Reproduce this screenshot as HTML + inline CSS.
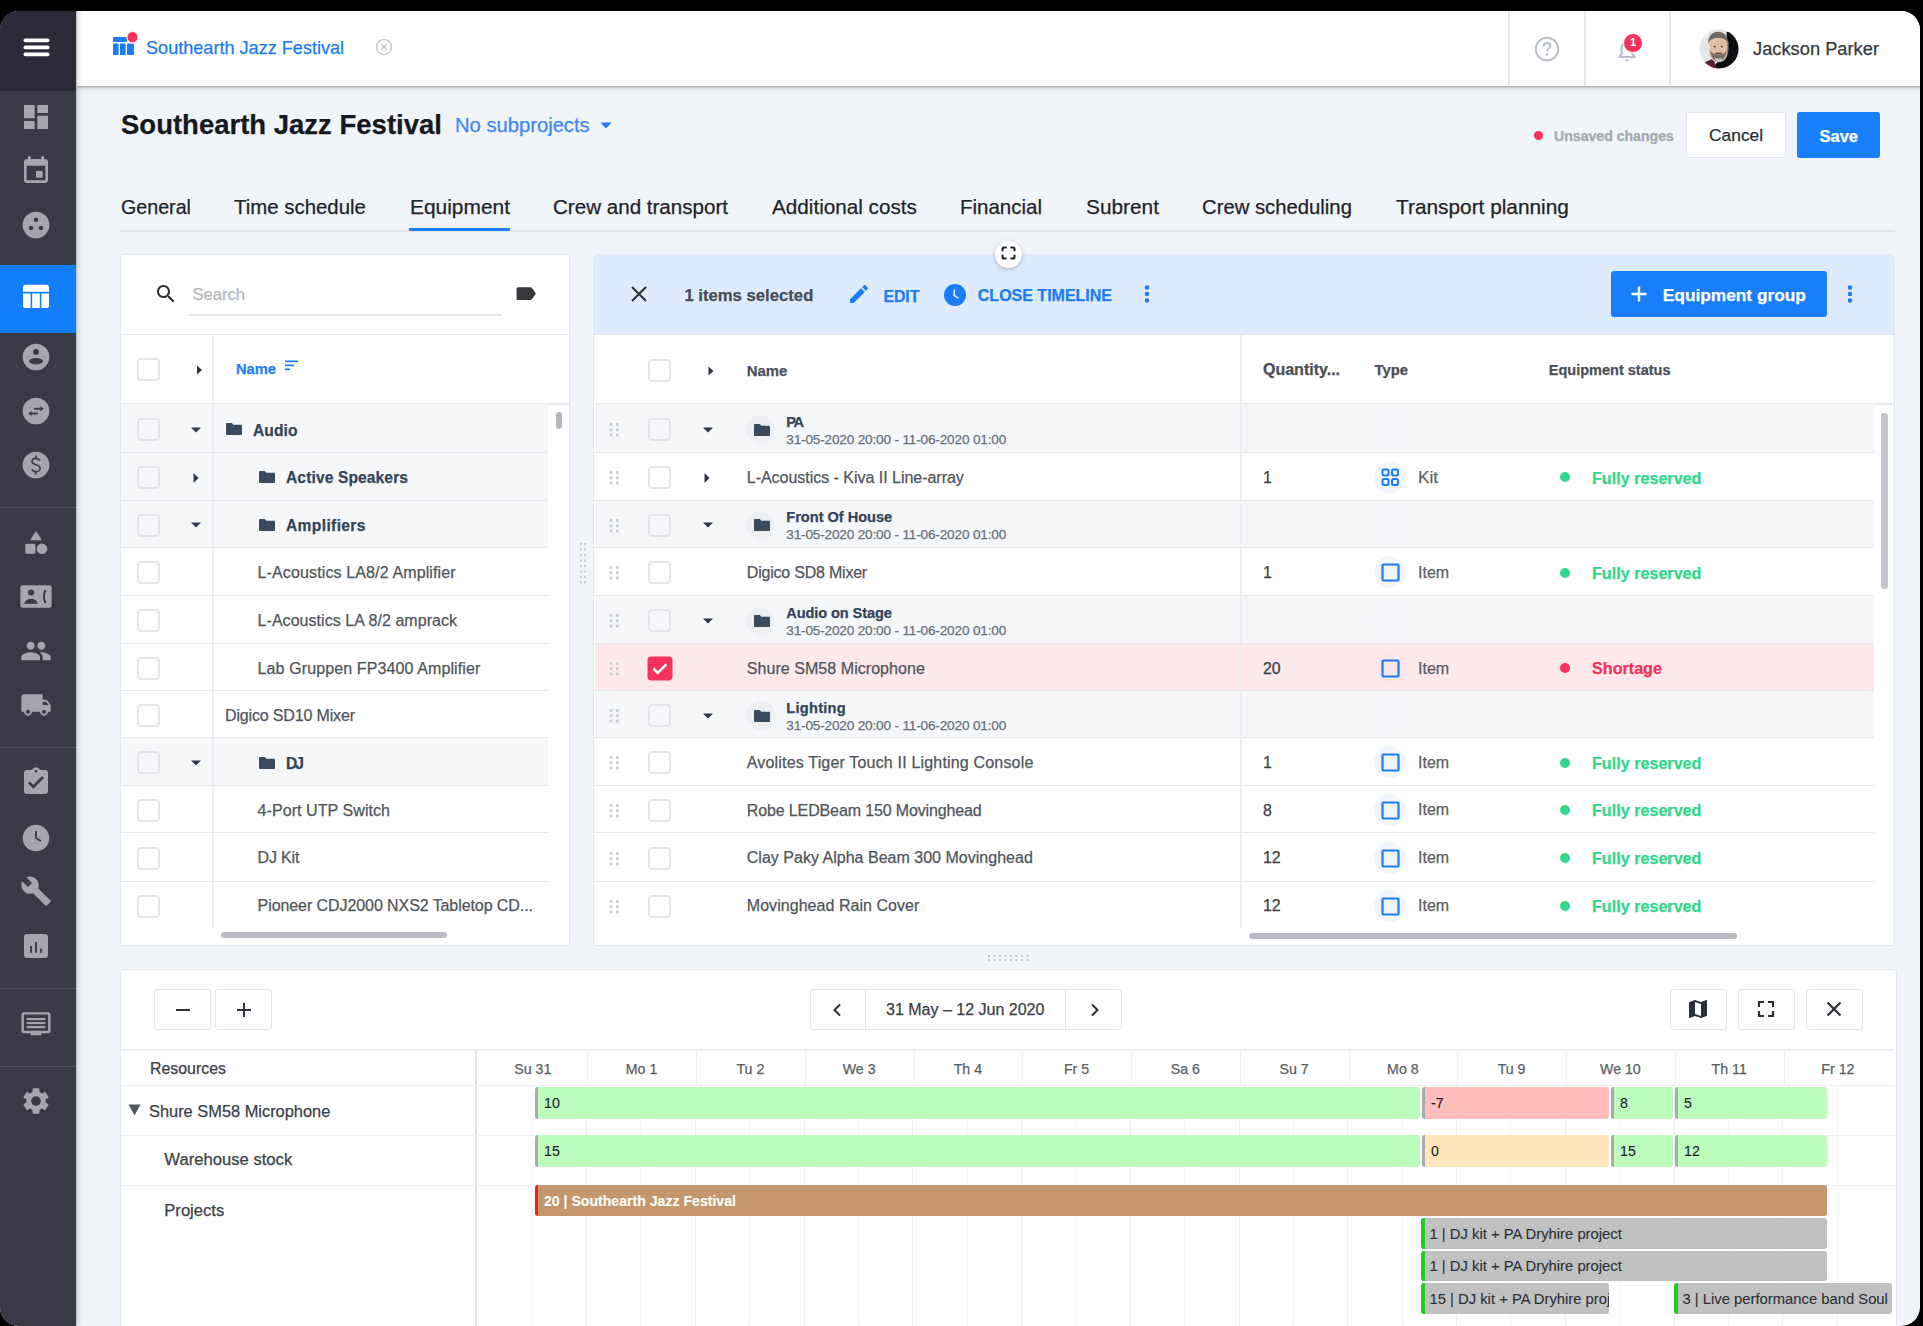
<!DOCTYPE html>
<html><head><meta charset="utf-8"><style>
*{box-sizing:border-box;margin:0;padding:0}
html,body{width:1923px;height:1326px;overflow:hidden;background:#000;font-family:"Liberation Sans",sans-serif;color:#2b3038}
.a{position:absolute}
#frame{position:absolute;left:0;top:11px;width:1920px;height:1315px;border-radius:19px;overflow:hidden;background:#f1f4f9}
#pg{position:absolute;left:0;top:-11px;width:1923px;height:1326px}
.t{position:absolute;white-space:nowrap;line-height:1;-webkit-text-stroke:0.25px currentColor}
.b{font-weight:bold}
.panel{position:absolute;background:#fff;border:1px solid #e4e7ec;border-radius:4px}
.cb{position:absolute;width:23px;height:23px;border:2px solid #e3e5e9;border-radius:4px;background:#fff}
.hl{position:absolute;height:1px;background:#e7e9ec}
.vl{position:absolute;width:1px;background:#e7e9ec}
</style></head><body><div id="frame"><div id="pg">
<div class="a" style="left:76px;top:0;width:1850px;height:86px;background:#fff;box-shadow:0 1px 2px rgba(0,0,0,.3),0 3px 7px rgba(0,0,0,.1)"></div>
<svg class="a" style="left:112px;top:30px" width="26" height="28" viewBox="0 0 26 28"><rect x="1" y="7" width="14" height="5" rx="1" fill="#1a7cf6"/><rect x="1" y="13.5" width="5.6" height="11.5" rx="1" fill="#1a7cf6"/><rect x="8" y="13.5" width="5.6" height="11.5" fill="#1a7cf6"/><rect x="15" y="13.5" width="7" height="11.5" rx="1" fill="#1a7cf6"/><circle cx="20.5" cy="7.2" r="5.6" fill="#f5325c" stroke="#fff" stroke-width="1"/></svg>
<div class="t" style="left:146px;top:39.2px;font-size:18.1px;color:#1a7cf6;">Southearth Jazz Festival</div>
<svg class="a" style="left:375px;top:38px" width="18" height="18" viewBox="0 0 18 18"><circle cx="9" cy="9" r="7.5" fill="none" stroke="#c9ccd1" stroke-width="1.6"/><path d="M6.2 6.2l5.6 5.6M11.8 6.2l-5.6 5.6" stroke="#c9ccd1" stroke-width="1.6"/></svg>
<div class="a" style="left:1508px;top:11px;width:2px;height:75px;background:#e6e8eb"></div>
<div class="a" style="left:1584px;top:11px;width:2px;height:75px;background:#e6e8eb"></div>
<div class="a" style="left:1669px;top:11px;width:2px;height:75px;background:#e6e8eb"></div>
<svg class="a" style="left:1533px;top:35px" width="28" height="28" viewBox="0 0 28 28"><circle cx="14" cy="14" r="11.3" fill="none" stroke="#b9c0c8" stroke-width="2"/><path d="M10.6 11.2c0-2 1.5-3.3 3.4-3.3s3.4 1.3 3.4 3.1c0 2.4-3.3 2.6-3.3 5.2" fill="none" stroke="#b9c0c8" stroke-width="2"/><circle cx="14" cy="19.6" r="1.3" fill="#b9c0c8"/></svg>
<svg class="a" style="left:1614px;top:38px" width="26" height="26" viewBox="0 0 26 26"><path d="M13 4.2c-3.4 0-5.4 2.6-5.4 5.9v6.2L5.2 19h15.6l-2.4-2.7v-6.2c0-3.3-2-5.9-5.4-5.9z" fill="none" stroke="#b9c0c8" stroke-width="2.2" stroke-linejoin="round"/><path d="M11 21.6h4a2 2 0 0 1-4 0z" fill="#b9c0c8"/></svg>
<div class="a" style="left:1623px;top:33px;width:20px;height:20px;border-radius:50%;background:#f5325c;border:1.5px solid #fff;color:#fff;font-size:11px;font-weight:bold;line-height:17px;text-align:center">1</div>
<svg class="a" style="left:1699px;top:29px" width="40" height="40" viewBox="0 0 42 42"><defs><clipPath id="av"><circle cx="21" cy="21" r="20.5"/></clipPath></defs><g clip-path="url(#av)"><rect width="42" height="42" fill="#e4e7ea"/><path d="M29 3H42V42H13L21 33L29 28Z" fill="#0e0d11"/><path d="M2 42L6 35 15 31 19 42Z" fill="#5c1f37"/><path d="M11 16c0-7 4-11 9.5-11S30 9 30 16v8c0 7-4 11-9.5 11S11 31 11 24z" fill="#e2bea5"/><path d="M14 9c2-2 4-3 7-3 4 0 7 2 8 5-2-1-5-2-8-2s-5 1-7 0z" fill="#f3dccb"/><path d="M9.5 16C9.5 7 14 3 20 3s10.5 4 10.5 12c-2-4-5-5.5-10.5-5.5S11.5 11 9.5 16z" fill="#6d6b6a"/><path d="M29.5 12l1.5 1v10l-1.5 2z" fill="#8a8886"/><path d="M11.5 22c1 8 4.5 12 9 12s8-4 8.5-12c-1.5 3-3.5 4.5-8.5 4.5S13 25 11.5 22z" fill="#77706b"/><path d="M16 31c1.2 2 2.8 3.3 4.8 3.3S24 33 25 31z" fill="#c9c9c9"/><circle cx="16.5" cy="18.5" r="1" fill="#3b3030"/><circle cx="24" cy="18.5" r="1" fill="#3b3030"/><path d="M17 25.5h7" stroke="#3a2a26" stroke-width="1.2"/></g></svg>
<div class="t" style="left:1753px;top:39.5px;font-size:18.3px;color:#34383e;">Jackson Parker</div>
<div class="t" style="left:121px;top:111.3px;font-size:27.5px;color:#15181d;font-weight:bold;">Southearth Jazz Festival</div>
<div class="t" style="left:455px;top:115.2px;font-size:20.2px;color:#3d87f5;">No subprojects</div>
<svg class="a" style="left:599px;top:121px" width="14" height="9" viewBox="0 0 14 9"><path d="M1.5 1.5h11L7 7.5z" fill="#1a7cf6"/></svg>
<div class="a" style="left:1534px;top:131px;width:9px;height:9px;border-radius:50%;background:#f5325c"></div>
<div class="t" style="left:1554px;top:129.4px;font-size:14.1px;color:#a3a8ae;font-weight:bold;">Unsaved changes</div>
<div class="a" style="left:1686px;top:112px;width:100px;height:46px;background:#fff;border:1px solid #e1e4e8;border-radius:3px"></div>
<div class="t" style="left:1709px;top:127.3px;font-size:17.4px;color:#2b2f35;">Cancel</div>
<div class="a" style="left:1797px;top:112px;width:83px;height:46px;background:#187efa;border-radius:3px"></div>
<div class="t" style="left:1819.5px;top:128.0px;font-size:16.5px;color:#fff;font-weight:bold;">Save</div>
<div class="t" style="left:121px;top:197.8px;font-size:19.68px;color:#1f232a;">General</div>
<div class="t" style="left:234px;top:197.2px;font-size:20.42px;color:#1f232a;">Time schedule</div>
<div class="t" style="left:410px;top:196.8px;font-size:20.92px;color:#1f232a;">Equipment</div>
<div class="t" style="left:553px;top:197.1px;font-size:20.58px;color:#1f232a;">Crew and transport</div>
<div class="t" style="left:772px;top:197.0px;font-size:20.7px;color:#1f232a;">Additional costs</div>
<div class="t" style="left:960px;top:197.1px;font-size:20.49px;color:#1f232a;">Financial</div>
<div class="t" style="left:1086px;top:196.8px;font-size:20.84px;color:#1f232a;">Subrent</div>
<div class="t" style="left:1202px;top:197.3px;font-size:20.29px;color:#1f232a;">Crew scheduling</div>
<div class="t" style="left:1396px;top:196.8px;font-size:20.84px;color:#1f232a;">Transport planning</div>
<div class="a" style="left:120px;top:230px;width:1775px;height:2px;background:#e3e5e9"></div>
<div class="a" style="left:409px;top:228px;width:101px;height:3px;background:#1a7cf6;border-radius:1px"></div>
<div class="panel" style="left:120px;top:254px;width:450px;height:692px"></div>
<svg class="a" style="left:154px;top:282px" width="24" height="24" viewBox="0 0 24 24"><path fill="#2b2f36" d="M15.5 14h-.79l-.28-.27C15.41 12.59 16 11.11 16 9.5 16 5.91 13.09 3 9.5 3S3 5.91 3 9.5 5.91 16 9.5 16c1.61 0 3.09-.59 4.23-1.57l.27.28v.79l5 4.99L20.49 19l-4.99-5zm-6 0C7.01 14 5 11.99 5 9.5S7.01 5 9.5 5 14 7.01 14 9.5 11.99 14 9.5 14z"/></svg>
<div class="t" style="left:192.5px;top:287.4px;font-size:16.6px;color:#b3b7bd;">Search</div>
<div class="a" style="left:189px;top:314px;width:313px;height:2px;background:#e2e5e9"></div>
<svg class="a" style="left:515px;top:284px" width="22" height="20" viewBox="0 0 24 20"><path d="M3.5 2.5h13.2c.7 0 1.3.3 1.7.8l4 5.6c.3.4.3.9 0 1.3l-4 5.6c-.4.5-1 .8-1.7.8H3.5c-1 0-1.8-.8-1.8-1.8V4.3c0-1 .8-1.8 1.8-1.8z" fill="#36383c"/></svg>
<div class="hl" style="left:121px;top:334px;width:448px"></div>
<div class="cb" style="left:137px;top:358px"></div>
<svg class="a" style="left:195px;top:364px" width="9" height="12" viewBox="0 0 9 12"><path d="M2 1.5l5 4.5-5 4.5z" fill="#2b3340"/></svg>
<div class="t" style="left:236px;top:362.0px;font-size:14.7px;color:#1a7cf6;font-weight:bold;">Name</div>
<svg class="a" style="left:284px;top:359px" width="16" height="14" viewBox="0 0 16 14"><rect x="1" y="1.5" width="13" height="1.7" fill="#1a7cf6"/><rect x="1" y="5.5" width="9" height="1.7" fill="#1a7cf6"/><rect x="1" y="9.5" width="5" height="1.7" fill="#1a7cf6"/></svg>
<div class="hl" style="left:121px;top:403px;width:448px;height:2px"></div>
<div class="a" style="left:121px;top:404.3px;width:427px;height:48.0px;background:#f6f7f9"></div>
<div class="cb" style="left:137px;top:418.0px;background:#f6f7f9;"></div>
<svg class="a" style="left:190px;top:425.7px" width="12" height="8" viewBox="0 0 12 8"><path d="M1 1.5h10L6 6.5z" fill="#2e3b4c"/></svg>
<svg class="a" style="left:225px;top:422.3px" width="18" height="14" viewBox="0 0 18 14"><path d="M1 2.2C1 1.5 1.5 1 2.2 1h4.6l1.6 1.7h7.4c.7 0 1.2.5 1.2 1.2v8c0 .7-.5 1.2-1.2 1.2H2.2c-.7 0-1.2-.5-1.2-1.2z" fill="#3a4a5d"/></svg>
<div class="t" style="left:253.0px;top:422.5px;font-size:15.6px;color:#34445a;font-weight:bold;letter-spacing:0.069px;">Audio</div>
<div class="a" style="left:121px;top:452.3px;width:427px;height:47.8px;background:#f6f7f9"></div>
<div class="cb" style="left:137px;top:465.9px;background:#f6f7f9;"></div>
<svg class="a" style="left:192px;top:471.6px" width="9" height="12" viewBox="0 0 9 12"><path d="M1.5 1l5 5-5 5z" fill="#2e3b4c"/></svg>
<svg class="a" style="left:258px;top:470.2px" width="18" height="14" viewBox="0 0 18 14"><path d="M1 2.2C1 1.5 1.5 1 2.2 1h4.6l1.6 1.7h7.4c.7 0 1.2.5 1.2 1.2v8c0 .7-.5 1.2-1.2 1.2H2.2c-.7 0-1.2-.5-1.2-1.2z" fill="#3a4a5d"/></svg>
<div class="t" style="left:286.0px;top:470.4px;font-size:15.6px;color:#34445a;font-weight:bold;letter-spacing:0.106px;">Active Speakers</div>
<div class="a" style="left:121px;top:500.1px;width:427px;height:47.3px;background:#f6f7f9"></div>
<div class="cb" style="left:137px;top:513.5px;background:#f6f7f9;"></div>
<svg class="a" style="left:190px;top:521.1px" width="12" height="8" viewBox="0 0 12 8"><path d="M1 1.5h10L6 6.5z" fill="#2e3b4c"/></svg>
<svg class="a" style="left:258px;top:517.8px" width="18" height="14" viewBox="0 0 18 14"><path d="M1 2.2C1 1.5 1.5 1 2.2 1h4.6l1.6 1.7h7.4c.7 0 1.2.5 1.2 1.2v8c0 .7-.5 1.2-1.2 1.2H2.2c-.7 0-1.2-.5-1.2-1.2z" fill="#3a4a5d"/></svg>
<div class="t" style="left:286.0px;top:517.9px;font-size:15.6px;color:#34445a;font-weight:bold;letter-spacing:0.357px;">Amplifiers</div>
<div class="cb" style="left:137px;top:561.4px;"></div>
<div class="t" style="left:257.6px;top:565.2px;font-size:16px;color:#50555c;letter-spacing:0.126px;">L-Acoustics LA8/2 Amplifier</div>
<div class="cb" style="left:137px;top:609.3px;"></div>
<div class="t" style="left:257.6px;top:613.1px;font-size:16px;color:#50555c;letter-spacing:0.044px;">L-Acoustics LA 8/2 amprack</div>
<div class="cb" style="left:137px;top:656.8px;"></div>
<div class="t" style="left:257.6px;top:660.6px;font-size:16px;color:#50555c;letter-spacing:0.112px;">Lab Gruppen FP3400 Amplifier</div>
<div class="cb" style="left:137px;top:704.1px;"></div>
<div class="t" style="left:225.0px;top:707.9px;font-size:16px;color:#50555c;letter-spacing:-0.155px;">Digico SD10 Mixer</div>
<div class="a" style="left:121px;top:737.9px;width:427px;height:47.5px;background:#f6f7f9"></div>
<div class="cb" style="left:137px;top:751.4px;background:#f6f7f9;"></div>
<svg class="a" style="left:190px;top:759.0px" width="12" height="8" viewBox="0 0 12 8"><path d="M1 1.5h10L6 6.5z" fill="#2e3b4c"/></svg>
<svg class="a" style="left:258px;top:755.6px" width="18" height="14" viewBox="0 0 18 14"><path d="M1 2.2C1 1.5 1.5 1 2.2 1h4.6l1.6 1.7h7.4c.7 0 1.2.5 1.2 1.2v8c0 .7-.5 1.2-1.2 1.2H2.2c-.7 0-1.2-.5-1.2-1.2z" fill="#3a4a5d"/></svg>
<div class="t" style="left:286.0px;top:755.8px;font-size:15.6px;color:#34445a;font-weight:bold;letter-spacing:-1.968px;">DJ</div>
<div class="cb" style="left:137px;top:798.7px;"></div>
<div class="t" style="left:257.6px;top:802.5px;font-size:16px;color:#50555c;letter-spacing:0.070px;">4-Port UTP Switch</div>
<div class="cb" style="left:137px;top:846.5px;"></div>
<div class="t" style="left:257.6px;top:850.3px;font-size:16px;color:#50555c;letter-spacing:-0.168px;">DJ Kit</div>
<div class="cb" style="left:137px;top:894.5px;"></div>
<div class="t" style="left:257.6px;top:898.3px;font-size:16px;color:#50555c;letter-spacing:-0.079px;">Pioneer CDJ2000 NXS2 Tabletop CD...</div>
<div class="vl" style="left:212px;top:335px;height:594px;width:2px;background:#eceef1"></div>
<div class="hl" style="left:121px;top:451.7px;width:427px;background:#e6e8eb"></div>
<div class="hl" style="left:121px;top:499.5px;width:427px;background:#e6e8eb"></div>
<div class="hl" style="left:121px;top:546.8px;width:427px;background:#e6e8eb"></div>
<div class="hl" style="left:121px;top:595.4px;width:427px;background:#e6e8eb"></div>
<div class="hl" style="left:121px;top:642.6px;width:427px;background:#e6e8eb"></div>
<div class="hl" style="left:121px;top:690.3px;width:427px;background:#e6e8eb"></div>
<div class="hl" style="left:121px;top:737.3px;width:427px;background:#e6e8eb"></div>
<div class="hl" style="left:121px;top:784.8px;width:427px;background:#e6e8eb"></div>
<div class="hl" style="left:121px;top:831.9px;width:427px;background:#e6e8eb"></div>
<div class="hl" style="left:121px;top:880.5px;width:427px;background:#e6e8eb"></div>
<div class="a" style="left:556px;top:412px;width:6px;height:17px;border-radius:3px;background:#b3b6bb"></div>
<div class="a" style="left:221px;top:932px;width:226px;height:6px;border-radius:3px;background:#b9bcc2"></div>
<svg class="a" style="left:580px;top:543px" width="8" height="44"><rect x="0" y="0.0" width="2" height="2" fill="#c9ccd1"/><rect x="4" y="0.0" width="2" height="2" fill="#c9ccd1"/><rect x="0" y="5.5" width="2" height="2" fill="#c9ccd1"/><rect x="4" y="5.5" width="2" height="2" fill="#c9ccd1"/><rect x="0" y="11.0" width="2" height="2" fill="#c9ccd1"/><rect x="4" y="11.0" width="2" height="2" fill="#c9ccd1"/><rect x="0" y="16.5" width="2" height="2" fill="#c9ccd1"/><rect x="4" y="16.5" width="2" height="2" fill="#c9ccd1"/><rect x="0" y="22.0" width="2" height="2" fill="#c9ccd1"/><rect x="4" y="22.0" width="2" height="2" fill="#c9ccd1"/><rect x="0" y="27.5" width="2" height="2" fill="#c9ccd1"/><rect x="4" y="27.5" width="2" height="2" fill="#c9ccd1"/><rect x="0" y="33.0" width="2" height="2" fill="#c9ccd1"/><rect x="4" y="33.0" width="2" height="2" fill="#c9ccd1"/><rect x="0" y="38.5" width="2" height="2" fill="#c9ccd1"/><rect x="4" y="38.5" width="2" height="2" fill="#c9ccd1"/></svg>
<div class="panel" style="left:593px;top:254px;width:1302px;height:692px;overflow:hidden"><div class="a" style="left:0;top:0;width:100%;height:80px;background:#ddebfd"></div></div>
<div class="a" style="left:995px;top:241px;width:27px;height:27px;border-radius:50%;background:#fff;box-shadow:0 1px 4px rgba(0,0,0,.25)"></div>
<svg class="a" style="left:1000px;top:245px" width="17" height="17" viewBox="0 0 17 17"><path d="M2.5 5.5V4a1.5 1.5 0 0 1 1.5-1.5h1.8M11.2 2.5H13a1.5 1.5 0 0 1 1.5 1.5v1.5M14.5 10.5V12a1.5 1.5 0 0 1-1.5 1.5h-1.8M5.8 13.5H4A1.5 1.5 0 0 1 2.5 12v-1.5" fill="none" stroke="#222529" stroke-width="2.1" stroke-linecap="round"/></svg>
<svg class="a" style="left:629px;top:284px" width="20" height="20" viewBox="0 0 20 20"><path d="M3 3l14 14M17 3L3 17" stroke="#2b2f36" stroke-width="2"/></svg>
<div class="t" style="left:684.4px;top:287.9px;font-size:16.7px;color:#454d59;font-weight:bold;">1 items selected</div>
<svg class="a" style="left:847px;top:282px" width="24" height="24" viewBox="0 0 24 24"><path fill="#1a7cf6" d="M3 17.25V21h3.75L17.81 9.94l-3.75-3.75L3 17.25zM20.71 7.04c.39-.39.39-1.02 0-1.41l-2.34-2.34c-.39-.39-1.02-.39-1.41 0l-1.83 1.83 3.75 3.75 1.83-1.83z"/></svg>
<div class="t" style="left:883.4px;top:288.6px;font-size:15.8px;color:#1a7cf6;font-weight:bold;">EDIT</div>
<svg class="a" style="left:943px;top:283px" width="24" height="24" viewBox="0 0 24 24"><circle cx="12" cy="12" r="11" fill="#1a7cf6"/><path d="M11.3 6.5v6l4.2 2.6" fill="none" stroke="#dfebfc" stroke-width="1.6"/></svg>
<div class="t" style="left:977.8px;top:288.4px;font-size:16.0px;color:#1a7cf6;font-weight:bold;">CLOSE TIMELINE</div>
<svg class="a" style="left:1144px;top:285px" width="6" height="18" viewBox="0 0 6 18"><circle cx="3" cy="2.5" r="2.2" fill="#1a7cf6"/><circle cx="3" cy="9" r="2.2" fill="#1a7cf6"/><circle cx="3" cy="15.5" r="2.2" fill="#1a7cf6"/></svg>
<div class="a" style="left:1611px;top:271px;width:216px;height:46px;background:#187efa;border-radius:3px"></div>
<svg class="a" style="left:1630px;top:285px" width="18" height="18" viewBox="0 0 18 18"><path d="M9 1.5v15M1.5 9h15" stroke="#fff" stroke-width="2.4"/></svg>
<div class="t" style="left:1662.8px;top:286.8px;font-size:17.3px;color:#fff;font-weight:bold;">Equipment group</div>
<svg class="a" style="left:1847px;top:285px" width="6" height="18" viewBox="0 0 6 18"><circle cx="3" cy="2.5" r="2.2" fill="#1a7cf6"/><circle cx="3" cy="9" r="2.2" fill="#1a7cf6"/><circle cx="3" cy="15.5" r="2.2" fill="#1a7cf6"/></svg>
<div class="cb" style="left:648px;top:359px"></div>
<svg class="a" style="left:707px;top:365px" width="9" height="12" viewBox="0 0 9 12"><path d="M1.5 1.5l5 4.5-5 4.5z" fill="#2b3340"/></svg>
<div class="t" style="left:746.8px;top:364.4px;font-size:14.9px;color:#4a4f57;font-weight:bold;">Name</div>
<div class="t" style="left:1263px;top:361.7px;font-size:16.0px;color:#4a4f57;font-weight:bold;">Quantity...</div>
<div class="t" style="left:1374.6px;top:362.8px;font-size:14.8px;color:#4a4f57;font-weight:bold;">Type</div>
<div class="t" style="left:1548.8px;top:363.0px;font-size:14.5px;color:#4a4f57;font-weight:bold;">Equipment status</div>
<div class="hl" style="left:595px;top:403px;width:1299px;height:2px"></div>
<div class="a" style="left:595px;top:404.3px;width:1279px;height:48.0px;background:#f6f7f9"></div>
<svg class="a" style="left:609px;top:423.0px" width="10" height="15"><rect x="0.5" y="0.0" width="3" height="3" rx="1.2" fill="#c9ccd1"/><rect x="6.8" y="0.0" width="3" height="3" rx="1.2" fill="#c9ccd1"/><rect x="0.5" y="5.3" width="3" height="3" rx="1.2" fill="#c9ccd1"/><rect x="6.8" y="5.3" width="3" height="3" rx="1.2" fill="#c9ccd1"/><rect x="0.5" y="10.6" width="3" height="3" rx="1.2" fill="#c9ccd1"/><rect x="6.8" y="10.6" width="3" height="3" rx="1.2" fill="#c9ccd1"/></svg>
<div class="cb" style="left:648px;top:418.0px;background:#f6f7f9;"></div>
<svg class="a" style="left:702px;top:425.7px" width="12" height="8" viewBox="0 0 12 8"><path d="M1 1.5h10L6 6.5z" fill="#2b3340"/></svg>
<div class="a" style="left:746px;top:415.2px;width:29px;height:29px;border-radius:50%;background:#edeff2"></div>
<svg class="a" style="left:753px;top:422.7px" width="18" height="14" viewBox="0 0 18 14"><path d="M1 2.2C1 1.5 1.5 1 2.2 1h4.6l1.6 1.7h7.4c.7 0 1.2.5 1.2 1.2v8c0 .7-.5 1.2-1.2 1.2H2.2c-.7 0-1.2-.5-1.2-1.2z" fill="#3a4a5d"/></svg>
<div class="t" style="left:786.3px;top:414.9px;font-size:14.6px;color:#34445a;font-weight:bold;letter-spacing:-1.499px;">PA</div>
<div class="t" style="left:786.3px;top:433.0px;font-size:13.6px;color:#6b7079;letter-spacing:-0.171px;">31-05-2020 20:00 - 11-06-2020 01:00</div>
<div class="a" style="left:1374px;top:413.0px;width:32px;height:32px;border-radius:50%;background:#f4f6f9"></div>
<svg class="a" style="left:609px;top:470.9px" width="10" height="15"><rect x="0.5" y="0.0" width="3" height="3" rx="1.2" fill="#c9ccd1"/><rect x="6.8" y="0.0" width="3" height="3" rx="1.2" fill="#c9ccd1"/><rect x="0.5" y="5.3" width="3" height="3" rx="1.2" fill="#c9ccd1"/><rect x="6.8" y="5.3" width="3" height="3" rx="1.2" fill="#c9ccd1"/><rect x="0.5" y="10.6" width="3" height="3" rx="1.2" fill="#c9ccd1"/><rect x="6.8" y="10.6" width="3" height="3" rx="1.2" fill="#c9ccd1"/></svg>
<div class="cb" style="left:648px;top:465.9px;"></div>
<svg class="a" style="left:703px;top:471.6px" width="9" height="12" viewBox="0 0 9 12"><path d="M1.5 1l5 5-5 5z" fill="#2b3340"/></svg>
<div class="t" style="left:746.8px;top:469.7px;font-size:16px;color:#50555c;letter-spacing:-0.027px;">L-Acoustics - Kiva II Line-array</div>
<div class="t" style="left:1263px;top:469.7px;font-size:15.9px;color:#3b4047;">1</div>
<div class="a" style="left:1374px;top:460.9px;width:32px;height:32px;border-radius:50%;background:#f1f5fc"></div>
<svg class="a" style="left:1381px;top:467.9px" width="19" height="19" viewBox="0 0 19 19"><rect x="1.5" y="1.5" width="6" height="6" rx="1.5" fill="none" stroke="#1a7cf6" stroke-width="2"/><rect x="11" y="1.5" width="6" height="6" rx="1.5" fill="none" stroke="#1a7cf6" stroke-width="2"/><rect x="1.5" y="11" width="6" height="6" rx="1.5" fill="none" stroke="#1a7cf6" stroke-width="2"/><rect x="11" y="11" width="6" height="6" rx="1.5" fill="none" stroke="#1a7cf6" stroke-width="2"/></svg>
<div class="t" style="left:1418px;top:468.7px;font-size:17.1px;color:#5a5f66;">Kit</div>
<div class="a" style="left:1560px;top:472.4px;width:10px;height:10px;border-radius:50%;background:#31d78d"></div>
<div class="t" style="left:1592px;top:469.5px;font-size:16.15px;color:#31d78d;font-weight:bold;">Fully reserved</div>
<div class="a" style="left:595px;top:500.1px;width:1279px;height:47.3px;background:#f6f7f9"></div>
<svg class="a" style="left:609px;top:518.5px" width="10" height="15"><rect x="0.5" y="0.0" width="3" height="3" rx="1.2" fill="#c9ccd1"/><rect x="6.8" y="0.0" width="3" height="3" rx="1.2" fill="#c9ccd1"/><rect x="0.5" y="5.3" width="3" height="3" rx="1.2" fill="#c9ccd1"/><rect x="6.8" y="5.3" width="3" height="3" rx="1.2" fill="#c9ccd1"/><rect x="0.5" y="10.6" width="3" height="3" rx="1.2" fill="#c9ccd1"/><rect x="6.8" y="10.6" width="3" height="3" rx="1.2" fill="#c9ccd1"/></svg>
<div class="cb" style="left:648px;top:513.5px;background:#f6f7f9;"></div>
<svg class="a" style="left:702px;top:521.1px" width="12" height="8" viewBox="0 0 12 8"><path d="M1 1.5h10L6 6.5z" fill="#2b3340"/></svg>
<div class="a" style="left:746px;top:510.6px;width:29px;height:29px;border-radius:50%;background:#edeff2"></div>
<svg class="a" style="left:753px;top:518.1px" width="18" height="14" viewBox="0 0 18 14"><path d="M1 2.2C1 1.5 1.5 1 2.2 1h4.6l1.6 1.7h7.4c.7 0 1.2.5 1.2 1.2v8c0 .7-.5 1.2-1.2 1.2H2.2c-.7 0-1.2-.5-1.2-1.2z" fill="#3a4a5d"/></svg>
<div class="t" style="left:786.3px;top:510.4px;font-size:14.6px;color:#34445a;font-weight:bold;letter-spacing:-0.022px;">Front Of House</div>
<div class="t" style="left:786.3px;top:528.4px;font-size:13.6px;color:#6b7079;letter-spacing:-0.171px;">31-05-2020 20:00 - 11-06-2020 01:00</div>
<div class="a" style="left:1374px;top:508.5px;width:32px;height:32px;border-radius:50%;background:#f4f6f9"></div>
<svg class="a" style="left:609px;top:566.4px" width="10" height="15"><rect x="0.5" y="0.0" width="3" height="3" rx="1.2" fill="#c9ccd1"/><rect x="6.8" y="0.0" width="3" height="3" rx="1.2" fill="#c9ccd1"/><rect x="0.5" y="5.3" width="3" height="3" rx="1.2" fill="#c9ccd1"/><rect x="6.8" y="5.3" width="3" height="3" rx="1.2" fill="#c9ccd1"/><rect x="0.5" y="10.6" width="3" height="3" rx="1.2" fill="#c9ccd1"/><rect x="6.8" y="10.6" width="3" height="3" rx="1.2" fill="#c9ccd1"/></svg>
<div class="cb" style="left:648px;top:561.4px;"></div>
<div class="t" style="left:746.8px;top:565.2px;font-size:16px;color:#50555c;letter-spacing:-0.213px;">Digico SD8 Mixer</div>
<div class="t" style="left:1263px;top:565.2px;font-size:15.9px;color:#3b4047;">1</div>
<div class="a" style="left:1374px;top:556.4px;width:32px;height:32px;border-radius:50%;background:#f1f5fc"></div>
<svg class="a" style="left:1381px;top:563.4px" width="19" height="19" viewBox="0 0 19 19"><rect x="1.5" y="1.5" width="16" height="16" rx="1" fill="none" stroke="#1a7cf6" stroke-width="2.2"/></svg>
<div class="t" style="left:1418px;top:565.1px;font-size:16.0px;color:#5a5f66;">Item</div>
<div class="a" style="left:1560px;top:567.9px;width:10px;height:10px;border-radius:50%;background:#31d78d"></div>
<div class="t" style="left:1592px;top:565.0px;font-size:16.15px;color:#31d78d;font-weight:bold;">Fully reserved</div>
<div class="a" style="left:595px;top:596.0px;width:1279px;height:47.2px;background:#f6f7f9"></div>
<svg class="a" style="left:609px;top:614.3px" width="10" height="15"><rect x="0.5" y="0.0" width="3" height="3" rx="1.2" fill="#c9ccd1"/><rect x="6.8" y="0.0" width="3" height="3" rx="1.2" fill="#c9ccd1"/><rect x="0.5" y="5.3" width="3" height="3" rx="1.2" fill="#c9ccd1"/><rect x="6.8" y="5.3" width="3" height="3" rx="1.2" fill="#c9ccd1"/><rect x="0.5" y="10.6" width="3" height="3" rx="1.2" fill="#c9ccd1"/><rect x="6.8" y="10.6" width="3" height="3" rx="1.2" fill="#c9ccd1"/></svg>
<div class="cb" style="left:648px;top:609.3px;background:#f6f7f9;"></div>
<svg class="a" style="left:702px;top:617.0px" width="12" height="8" viewBox="0 0 12 8"><path d="M1 1.5h10L6 6.5z" fill="#2b3340"/></svg>
<div class="a" style="left:746px;top:606.5px;width:29px;height:29px;border-radius:50%;background:#edeff2"></div>
<svg class="a" style="left:753px;top:614.0px" width="18" height="14" viewBox="0 0 18 14"><path d="M1 2.2C1 1.5 1.5 1 2.2 1h4.6l1.6 1.7h7.4c.7 0 1.2.5 1.2 1.2v8c0 .7-.5 1.2-1.2 1.2H2.2c-.7 0-1.2-.5-1.2-1.2z" fill="#3a4a5d"/></svg>
<div class="t" style="left:786.3px;top:606.2px;font-size:14.6px;color:#34445a;font-weight:bold;letter-spacing:-0.107px;">Audio on Stage</div>
<div class="t" style="left:786.3px;top:624.3px;font-size:13.6px;color:#6b7079;letter-spacing:-0.171px;">31-05-2020 20:00 - 11-06-2020 01:00</div>
<div class="a" style="left:1374px;top:604.3px;width:32px;height:32px;border-radius:50%;background:#f4f6f9"></div>
<div class="a" style="left:595px;top:643.2px;width:1279px;height:47.7px;background:#fde8ec"></div>
<svg class="a" style="left:609px;top:661.8px" width="10" height="15"><rect x="0.5" y="0.0" width="3" height="3" rx="1.2" fill="#c9ccd1"/><rect x="6.8" y="0.0" width="3" height="3" rx="1.2" fill="#c9ccd1"/><rect x="0.5" y="5.3" width="3" height="3" rx="1.2" fill="#c9ccd1"/><rect x="6.8" y="5.3" width="3" height="3" rx="1.2" fill="#c9ccd1"/><rect x="0.5" y="10.6" width="3" height="3" rx="1.2" fill="#c9ccd1"/><rect x="6.8" y="10.6" width="3" height="3" rx="1.2" fill="#c9ccd1"/></svg>
<svg class="a" style="left:647px;top:655.5px" width="26" height="25" viewBox="0 0 26 25"><rect x="0.5" y="0.5" width="25" height="24" rx="4" fill="#f5325c"/><path d="M6.5 12.5l4.3 4.3 8.5-8.5" fill="none" stroke="#fff" stroke-width="2.6"/></svg>
<div class="t" style="left:746.8px;top:660.6px;font-size:16px;color:#50555c;letter-spacing:0.052px;">Shure SM58 Microphone</div>
<div class="t" style="left:1263px;top:660.6px;font-size:15.9px;color:#3b4047;">20</div>
<div class="a" style="left:1374px;top:651.8px;width:32px;height:32px;border-radius:50%;background:#fbe6ec"></div>
<svg class="a" style="left:1381px;top:658.8px" width="19" height="19" viewBox="0 0 19 19"><rect x="1.5" y="1.5" width="16" height="16" rx="1" fill="none" stroke="#1a7cf6" stroke-width="2.2"/></svg>
<div class="t" style="left:1418px;top:660.5px;font-size:16.0px;color:#5a5f66;">Item</div>
<div class="a" style="left:1560px;top:663.2px;width:10px;height:10px;border-radius:50%;background:#f5325c"></div>
<div class="t" style="left:1592px;top:660.4px;font-size:16.15px;color:#f5325c;font-weight:bold;">Shortage</div>
<div class="a" style="left:595px;top:690.9px;width:1279px;height:47.0px;background:#f6f7f9"></div>
<svg class="a" style="left:609px;top:709.1px" width="10" height="15"><rect x="0.5" y="0.0" width="3" height="3" rx="1.2" fill="#c9ccd1"/><rect x="6.8" y="0.0" width="3" height="3" rx="1.2" fill="#c9ccd1"/><rect x="0.5" y="5.3" width="3" height="3" rx="1.2" fill="#c9ccd1"/><rect x="6.8" y="5.3" width="3" height="3" rx="1.2" fill="#c9ccd1"/><rect x="0.5" y="10.6" width="3" height="3" rx="1.2" fill="#c9ccd1"/><rect x="6.8" y="10.6" width="3" height="3" rx="1.2" fill="#c9ccd1"/></svg>
<div class="cb" style="left:648px;top:704.1px;background:#f6f7f9;"></div>
<svg class="a" style="left:702px;top:711.8px" width="12" height="8" viewBox="0 0 12 8"><path d="M1 1.5h10L6 6.5z" fill="#2b3340"/></svg>
<div class="a" style="left:746px;top:701.3px;width:29px;height:29px;border-radius:50%;background:#edeff2"></div>
<svg class="a" style="left:753px;top:708.8px" width="18" height="14" viewBox="0 0 18 14"><path d="M1 2.2C1 1.5 1.5 1 2.2 1h4.6l1.6 1.7h7.4c.7 0 1.2.5 1.2 1.2v8c0 .7-.5 1.2-1.2 1.2H2.2c-.7 0-1.2-.5-1.2-1.2z" fill="#3a4a5d"/></svg>
<div class="t" style="left:786.3px;top:701.0px;font-size:14.6px;color:#34445a;font-weight:bold;letter-spacing:0.258px;">Lighting</div>
<div class="t" style="left:786.3px;top:719.1px;font-size:13.6px;color:#6b7079;letter-spacing:-0.171px;">31-05-2020 20:00 - 11-06-2020 01:00</div>
<div class="a" style="left:1374px;top:699.1px;width:32px;height:32px;border-radius:50%;background:#f4f6f9"></div>
<svg class="a" style="left:609px;top:756.4px" width="10" height="15"><rect x="0.5" y="0.0" width="3" height="3" rx="1.2" fill="#c9ccd1"/><rect x="6.8" y="0.0" width="3" height="3" rx="1.2" fill="#c9ccd1"/><rect x="0.5" y="5.3" width="3" height="3" rx="1.2" fill="#c9ccd1"/><rect x="6.8" y="5.3" width="3" height="3" rx="1.2" fill="#c9ccd1"/><rect x="0.5" y="10.6" width="3" height="3" rx="1.2" fill="#c9ccd1"/><rect x="6.8" y="10.6" width="3" height="3" rx="1.2" fill="#c9ccd1"/></svg>
<div class="cb" style="left:648px;top:751.4px;"></div>
<div class="t" style="left:746.8px;top:755.2px;font-size:16px;color:#50555c;letter-spacing:0.177px;">Avolites Tiger Touch II Lighting Console</div>
<div class="t" style="left:1263px;top:755.2px;font-size:15.9px;color:#3b4047;">1</div>
<div class="a" style="left:1374px;top:746.4px;width:32px;height:32px;border-radius:50%;background:#f1f5fc"></div>
<svg class="a" style="left:1381px;top:753.4px" width="19" height="19" viewBox="0 0 19 19"><rect x="1.5" y="1.5" width="16" height="16" rx="1" fill="none" stroke="#1a7cf6" stroke-width="2.2"/></svg>
<div class="t" style="left:1418px;top:755.1px;font-size:16.0px;color:#5a5f66;">Item</div>
<div class="a" style="left:1560px;top:757.9px;width:10px;height:10px;border-radius:50%;background:#31d78d"></div>
<div class="t" style="left:1592px;top:755.0px;font-size:16.15px;color:#31d78d;font-weight:bold;">Fully reserved</div>
<svg class="a" style="left:609px;top:803.7px" width="10" height="15"><rect x="0.5" y="0.0" width="3" height="3" rx="1.2" fill="#c9ccd1"/><rect x="6.8" y="0.0" width="3" height="3" rx="1.2" fill="#c9ccd1"/><rect x="0.5" y="5.3" width="3" height="3" rx="1.2" fill="#c9ccd1"/><rect x="6.8" y="5.3" width="3" height="3" rx="1.2" fill="#c9ccd1"/><rect x="0.5" y="10.6" width="3" height="3" rx="1.2" fill="#c9ccd1"/><rect x="6.8" y="10.6" width="3" height="3" rx="1.2" fill="#c9ccd1"/></svg>
<div class="cb" style="left:648px;top:798.7px;"></div>
<div class="t" style="left:746.8px;top:802.5px;font-size:16px;color:#50555c;letter-spacing:-0.131px;">Robe LEDBeam 150 Movinghead</div>
<div class="t" style="left:1263px;top:802.5px;font-size:15.9px;color:#3b4047;">8</div>
<div class="a" style="left:1374px;top:793.7px;width:32px;height:32px;border-radius:50%;background:#f1f5fc"></div>
<svg class="a" style="left:1381px;top:800.7px" width="19" height="19" viewBox="0 0 19 19"><rect x="1.5" y="1.5" width="16" height="16" rx="1" fill="none" stroke="#1a7cf6" stroke-width="2.2"/></svg>
<div class="t" style="left:1418px;top:802.4px;font-size:16.0px;color:#5a5f66;">Item</div>
<div class="a" style="left:1560px;top:805.2px;width:10px;height:10px;border-radius:50%;background:#31d78d"></div>
<div class="t" style="left:1592px;top:802.3px;font-size:16.15px;color:#31d78d;font-weight:bold;">Fully reserved</div>
<svg class="a" style="left:609px;top:851.5px" width="10" height="15"><rect x="0.5" y="0.0" width="3" height="3" rx="1.2" fill="#c9ccd1"/><rect x="6.8" y="0.0" width="3" height="3" rx="1.2" fill="#c9ccd1"/><rect x="0.5" y="5.3" width="3" height="3" rx="1.2" fill="#c9ccd1"/><rect x="6.8" y="5.3" width="3" height="3" rx="1.2" fill="#c9ccd1"/><rect x="0.5" y="10.6" width="3" height="3" rx="1.2" fill="#c9ccd1"/><rect x="6.8" y="10.6" width="3" height="3" rx="1.2" fill="#c9ccd1"/></svg>
<div class="cb" style="left:648px;top:846.5px;"></div>
<div class="t" style="left:746.8px;top:850.3px;font-size:16px;color:#50555c;letter-spacing:0.014px;">Clay Paky Alpha Beam 300 Movinghead</div>
<div class="t" style="left:1263px;top:850.3px;font-size:15.9px;color:#3b4047;">12</div>
<div class="a" style="left:1374px;top:841.5px;width:32px;height:32px;border-radius:50%;background:#f1f5fc"></div>
<svg class="a" style="left:1381px;top:848.5px" width="19" height="19" viewBox="0 0 19 19"><rect x="1.5" y="1.5" width="16" height="16" rx="1" fill="none" stroke="#1a7cf6" stroke-width="2.2"/></svg>
<div class="t" style="left:1418px;top:850.2px;font-size:16.0px;color:#5a5f66;">Item</div>
<div class="a" style="left:1560px;top:853.0px;width:10px;height:10px;border-radius:50%;background:#31d78d"></div>
<div class="t" style="left:1592px;top:850.1px;font-size:16.15px;color:#31d78d;font-weight:bold;">Fully reserved</div>
<svg class="a" style="left:609px;top:899.5px" width="10" height="15"><rect x="0.5" y="0.0" width="3" height="3" rx="1.2" fill="#c9ccd1"/><rect x="6.8" y="0.0" width="3" height="3" rx="1.2" fill="#c9ccd1"/><rect x="0.5" y="5.3" width="3" height="3" rx="1.2" fill="#c9ccd1"/><rect x="6.8" y="5.3" width="3" height="3" rx="1.2" fill="#c9ccd1"/><rect x="0.5" y="10.6" width="3" height="3" rx="1.2" fill="#c9ccd1"/><rect x="6.8" y="10.6" width="3" height="3" rx="1.2" fill="#c9ccd1"/></svg>
<div class="cb" style="left:648px;top:894.5px;"></div>
<div class="t" style="left:746.8px;top:898.3px;font-size:16px;color:#50555c;letter-spacing:0.046px;">Movinghead Rain Cover</div>
<div class="t" style="left:1263px;top:898.3px;font-size:15.9px;color:#3b4047;">12</div>
<div class="a" style="left:1374px;top:889.5px;width:32px;height:32px;border-radius:50%;background:#f1f5fc"></div>
<svg class="a" style="left:1381px;top:896.5px" width="19" height="19" viewBox="0 0 19 19"><rect x="1.5" y="1.5" width="16" height="16" rx="1" fill="none" stroke="#1a7cf6" stroke-width="2.2"/></svg>
<div class="t" style="left:1418px;top:898.2px;font-size:16.0px;color:#5a5f66;">Item</div>
<div class="a" style="left:1560px;top:901.0px;width:10px;height:10px;border-radius:50%;background:#31d78d"></div>
<div class="t" style="left:1592px;top:898.1px;font-size:16.15px;color:#31d78d;font-weight:bold;">Fully reserved</div>
<div class="hl" style="left:594px;top:451.7px;width:1280px;background:#e6e8eb"></div>
<div class="hl" style="left:594px;top:499.5px;width:1280px;background:#e6e8eb"></div>
<div class="hl" style="left:594px;top:546.8px;width:1280px;background:#e6e8eb"></div>
<div class="hl" style="left:594px;top:595.4px;width:1280px;background:#e6e8eb"></div>
<div class="hl" style="left:594px;top:642.6px;width:1280px;background:#e6e8eb"></div>
<div class="hl" style="left:594px;top:690.3px;width:1280px;background:#e6e8eb"></div>
<div class="hl" style="left:594px;top:737.3px;width:1280px;background:#e6e8eb"></div>
<div class="hl" style="left:594px;top:784.8px;width:1280px;background:#e6e8eb"></div>
<div class="hl" style="left:594px;top:831.9px;width:1280px;background:#e6e8eb"></div>
<div class="hl" style="left:594px;top:880.5px;width:1280px;background:#e6e8eb"></div>
<div class="vl" style="left:1240px;top:335px;height:593px;width:2px;background:#eceef1"></div>
<div class="a" style="left:1881px;top:413px;width:7px;height:176px;border-radius:3px;background:#c2c5ca"></div>
<div class="a" style="left:1249px;top:933px;width:488px;height:6px;border-radius:3px;background:#b9bcc2"></div>
<svg class="a" style="left:988px;top:955px" width="44" height="6"><rect x="0.0" y="0" width="2" height="2" fill="#c9ccd1"/><rect x="5.5" y="0" width="2" height="2" fill="#c9ccd1"/><rect x="11.0" y="0" width="2" height="2" fill="#c9ccd1"/><rect x="16.5" y="0" width="2" height="2" fill="#c9ccd1"/><rect x="22.0" y="0" width="2" height="2" fill="#c9ccd1"/><rect x="27.5" y="0" width="2" height="2" fill="#c9ccd1"/><rect x="33.0" y="0" width="2" height="2" fill="#c9ccd1"/><rect x="38.5" y="0" width="2" height="2" fill="#c9ccd1"/><rect x="0.0" y="4" width="2" height="2" fill="#c9ccd1"/><rect x="5.5" y="4" width="2" height="2" fill="#c9ccd1"/><rect x="11.0" y="4" width="2" height="2" fill="#c9ccd1"/><rect x="16.5" y="4" width="2" height="2" fill="#c9ccd1"/><rect x="22.0" y="4" width="2" height="2" fill="#c9ccd1"/><rect x="27.5" y="4" width="2" height="2" fill="#c9ccd1"/><rect x="33.0" y="4" width="2" height="2" fill="#c9ccd1"/><rect x="38.5" y="4" width="2" height="2" fill="#c9ccd1"/></svg>
<div class="panel" style="left:120px;top:969px;width:1777px;height:400px"></div>
<div class="a" style="left:154px;top:989px;width:57px;height:41px;background:#fff;border:1px solid #e1e4e8;border-radius:3px"></div>
<div class="a" style="left:215px;top:989px;width:57px;height:41px;background:#fff;border:1px solid #e1e4e8;border-radius:3px"></div>
<svg class="a" style="left:173px;top:1000px" width="20" height="20" viewBox="0 0 20 20"><path d="M3 10h14" stroke="#2b2f36" stroke-width="2"/></svg>
<svg class="a" style="left:234px;top:1000px" width="20" height="20" viewBox="0 0 20 20"><path d="M3 10h14M10 3v14" stroke="#2b2f36" stroke-width="2"/></svg>
<div class="a" style="left:810px;top:989px;width:312px;height:41px;background:#fff;border:1px solid #e1e4e8;border-radius:3px"></div>
<div class="vl" style="left:865px;top:990px;height:39px;background:#e1e4e8"></div>
<div class="vl" style="left:1065px;top:990px;height:39px;background:#e1e4e8"></div>
<svg class="a" style="left:829px;top:1001px" width="18" height="18" viewBox="0 0 18 18"><path d="M11 3.5L5.5 9l5.5 5.5" fill="none" stroke="#2b2f36" stroke-width="2"/></svg>
<svg class="a" style="left:1085px;top:1001px" width="18" height="18" viewBox="0 0 18 18"><path d="M7 3.5L12.5 9 7 14.5" fill="none" stroke="#2b2f36" stroke-width="2"/></svg>
<div class="t" style="left:886px;top:1001.9px;font-size:16.0px;color:#3b4047;">31 May – 12 Jun 2020</div>
<div class="a" style="left:1670px;top:989px;width:57px;height:41px;background:#fff;border:1px solid #e1e4e8;border-radius:3px"></div>
<div class="a" style="left:1738px;top:989px;width:57px;height:41px;background:#fff;border:1px solid #e1e4e8;border-radius:3px"></div>
<div class="a" style="left:1806px;top:989px;width:57px;height:41px;background:#fff;border:1px solid #e1e4e8;border-radius:3px"></div>
<svg class="a" style="left:1686px;top:997px" width="24" height="24" viewBox="0 0 24 24"><path fill="#2b2f36" d="M20.5 3l-.16.03L15 5.1 9 3 3.36 4.9c-.21.07-.36.25-.36.48V20.5c0 .28.22.5.5.5l.16-.03L9 18.9l6 2.1 5.64-1.9c.21-.07.36-.25.36-.48V3.5c0-.28-.22-.5-.5-.5zM15 19l-6-2.11V5l6 2.11V19z"/></svg>
<svg class="a" style="left:1756px;top:999px" width="20" height="20" viewBox="0 0 20 20"><path d="M3 8V3h5M12 3h5v5M17 12v5h-5M8 17H3v-5" fill="none" stroke="#2b2f36" stroke-width="2.2"/></svg>
<svg class="a" style="left:1824px;top:999px" width="20" height="20" viewBox="0 0 20 20"><path d="M3.5 3.5l13 13M16.5 3.5l-13 13" stroke="#2b2f36" stroke-width="2.2"/></svg>
<div class="hl" style="left:121px;top:1049px;width:1773px;height:2px;background:#eceef2"></div>
<div class="a" style="left:531.7px;top:1086px;height:260px;width:0;border-left:1px dotted #eceef2"></div>
<div class="t" style="left:478.5px;top:1061.6px;width:108.75px;text-align:center;font-size:14.2px;color:#5b6067">Su 31</div>
<div class="vl" style="left:587.2px;top:1051px;height:35px;background:#eef0f4"></div>
<div class="vl" style="left:586.0px;top:1086px;height:260px;background:#eef0f4"></div>
<div class="a" style="left:640.4px;top:1086px;height:260px;width:0;border-left:1px dotted #eceef2"></div>
<div class="t" style="left:587.2px;top:1061.6px;width:108.75px;text-align:center;font-size:14.2px;color:#5b6067">Mo 1</div>
<div class="vl" style="left:696.0px;top:1051px;height:35px;background:#eef0f4"></div>
<div class="vl" style="left:694.8px;top:1086px;height:260px;background:#eef0f4"></div>
<div class="a" style="left:749.2px;top:1086px;height:260px;width:0;border-left:1px dotted #eceef2"></div>
<div class="t" style="left:696.0px;top:1061.6px;width:108.75px;text-align:center;font-size:14.2px;color:#5b6067">Tu 2</div>
<div class="vl" style="left:804.8px;top:1051px;height:35px;background:#eef0f4"></div>
<div class="vl" style="left:803.5px;top:1086px;height:260px;background:#eef0f4"></div>
<div class="a" style="left:857.9px;top:1086px;height:260px;width:0;border-left:1px dotted #eceef2"></div>
<div class="t" style="left:804.8px;top:1061.6px;width:108.75px;text-align:center;font-size:14.2px;color:#5b6067">We 3</div>
<div class="vl" style="left:913.5px;top:1051px;height:35px;background:#eef0f4"></div>
<div class="vl" style="left:912.3px;top:1086px;height:260px;background:#eef0f4"></div>
<div class="a" style="left:966.7px;top:1086px;height:260px;width:0;border-left:1px dotted #eceef2"></div>
<div class="t" style="left:913.5px;top:1061.6px;width:108.75px;text-align:center;font-size:14.2px;color:#5b6067">Th 4</div>
<div class="vl" style="left:1022.2px;top:1051px;height:35px;background:#eef0f4"></div>
<div class="vl" style="left:1021.0px;top:1086px;height:260px;background:#eef0f4"></div>
<div class="a" style="left:1075.4px;top:1086px;height:260px;width:0;border-left:1px dotted #eceef2"></div>
<div class="t" style="left:1022.2px;top:1061.6px;width:108.75px;text-align:center;font-size:14.2px;color:#5b6067">Fr 5</div>
<div class="vl" style="left:1131.0px;top:1051px;height:35px;background:#eef0f4"></div>
<div class="vl" style="left:1129.8px;top:1086px;height:260px;background:#eef0f4"></div>
<div class="a" style="left:1184.2px;top:1086px;height:260px;width:0;border-left:1px dotted #eceef2"></div>
<div class="t" style="left:1131.0px;top:1061.6px;width:108.75px;text-align:center;font-size:14.2px;color:#5b6067">Sa 6</div>
<div class="vl" style="left:1239.8px;top:1051px;height:35px;background:#eef0f4"></div>
<div class="vl" style="left:1238.5px;top:1086px;height:260px;background:#eef0f4"></div>
<div class="a" style="left:1292.9px;top:1086px;height:260px;width:0;border-left:1px dotted #eceef2"></div>
<div class="t" style="left:1239.8px;top:1061.6px;width:108.75px;text-align:center;font-size:14.2px;color:#5b6067">Su 7</div>
<div class="vl" style="left:1348.5px;top:1051px;height:35px;background:#eef0f4"></div>
<div class="vl" style="left:1347.3px;top:1086px;height:260px;background:#eef0f4"></div>
<div class="a" style="left:1401.7px;top:1086px;height:260px;width:0;border-left:1px dotted #eceef2"></div>
<div class="t" style="left:1348.5px;top:1061.6px;width:108.75px;text-align:center;font-size:14.2px;color:#5b6067">Mo 8</div>
<div class="vl" style="left:1457.2px;top:1051px;height:35px;background:#eef0f4"></div>
<div class="vl" style="left:1456.0px;top:1086px;height:260px;background:#eef0f4"></div>
<div class="a" style="left:1510.4px;top:1086px;height:260px;width:0;border-left:1px dotted #eceef2"></div>
<div class="t" style="left:1457.2px;top:1061.6px;width:108.75px;text-align:center;font-size:14.2px;color:#5b6067">Tu 9</div>
<div class="vl" style="left:1566.0px;top:1051px;height:35px;background:#eef0f4"></div>
<div class="vl" style="left:1564.8px;top:1086px;height:260px;background:#eef0f4"></div>
<div class="a" style="left:1619.2px;top:1086px;height:260px;width:0;border-left:1px dotted #eceef2"></div>
<div class="t" style="left:1566.0px;top:1061.6px;width:108.75px;text-align:center;font-size:14.2px;color:#5b6067">We 10</div>
<div class="vl" style="left:1674.8px;top:1051px;height:35px;background:#eef0f4"></div>
<div class="vl" style="left:1673.5px;top:1086px;height:260px;background:#eef0f4"></div>
<div class="a" style="left:1727.9px;top:1086px;height:260px;width:0;border-left:1px dotted #eceef2"></div>
<div class="t" style="left:1674.8px;top:1061.6px;width:108.75px;text-align:center;font-size:14.2px;color:#5b6067">Th 11</div>
<div class="vl" style="left:1783.5px;top:1051px;height:35px;background:#eef0f4"></div>
<div class="vl" style="left:1782.3px;top:1086px;height:260px;background:#eef0f4"></div>
<div class="a" style="left:1836.7px;top:1086px;height:260px;width:0;border-left:1px dotted #eceef2"></div>
<div class="t" style="left:1783.5px;top:1061.6px;width:108.75px;text-align:center;font-size:14.2px;color:#5b6067">Fr 12</div>
<div class="a" style="left:475px;top:1051px;width:2px;height:300px;background:#e0e2e6"></div>
<div class="hl" style="left:121px;top:1085px;width:1773px;background:#eef0f3"></div>
<div class="hl" style="left:121px;top:1135px;width:1773px;background:#f0f2f5"></div>
<div class="hl" style="left:121px;top:1185px;width:1773px;background:#f0f2f5"></div>
<div class="t" style="left:150px;top:1060.7px;font-size:15.9px;color:#3b4047;">Resources</div>
<svg class="a" style="left:127px;top:1103px" width="15" height="14" viewBox="0 0 15 14"><path d="M1.5 1.5h12L7.5 12.5z" fill="#555a61"/></svg>
<div class="t" style="left:149px;top:1103.1px;font-size:16.4px;color:#3b4047;">Shure SM58 Microphone</div>
<div class="t" style="left:164.3px;top:1152.2px;font-size:16.65px;color:#3b4047;">Warehouse stock</div>
<div class="t" style="left:164.3px;top:1202.9px;font-size:16.6px;color:#3b4047;">Projects</div>
<div class="a" style="left:535px;top:1087px;width:885px;height:32px;background:#bdfcbd;border-left:3px solid #a8aaad;border-radius:3px;overflow:hidden"><div class="t" style="left:6px;top:9.4px;font-size:14.2px;color:#1a1d22;-webkit-text-stroke:0.1px #1a1d22">10</div></div>
<div class="a" style="left:1422px;top:1087px;width:187px;height:32px;background:#ffbdbd;border-left:3px solid #a8aaad;border-radius:3px;overflow:hidden"><div class="t" style="left:6px;top:9.4px;font-size:14.2px;color:#1a1d22;-webkit-text-stroke:0.1px #1a1d22">-7</div></div>
<div class="a" style="left:1611px;top:1087px;width:62px;height:32px;background:#bdfcbd;border-left:3px solid #a8aaad;border-radius:3px;overflow:hidden"><div class="t" style="left:6px;top:9.4px;font-size:14.2px;color:#1a1d22;-webkit-text-stroke:0.1px #1a1d22">8</div></div>
<div class="a" style="left:1675px;top:1087px;width:152px;height:32px;background:#bdfcbd;border-left:3px solid #a8aaad;border-radius:3px;overflow:hidden"><div class="t" style="left:6px;top:9.4px;font-size:14.2px;color:#1a1d22;-webkit-text-stroke:0.1px #1a1d22">5</div></div>
<div class="a" style="left:535px;top:1135px;width:885px;height:32px;background:#bdfcbd;border-left:3px solid #a8aaad;border-radius:3px;overflow:hidden"><div class="t" style="left:6px;top:9.4px;font-size:14.2px;color:#1a1d22;-webkit-text-stroke:0.1px #1a1d22">15</div></div>
<div class="a" style="left:1422px;top:1135px;width:187px;height:32px;background:#ffe6bd;border-left:3px solid #a8aaad;border-radius:3px;overflow:hidden"><div class="t" style="left:6px;top:9.4px;font-size:14.2px;color:#1a1d22;-webkit-text-stroke:0.1px #1a1d22">0</div></div>
<div class="a" style="left:1611px;top:1135px;width:62px;height:32px;background:#bdfcbd;border-left:3px solid #a8aaad;border-radius:3px;overflow:hidden"><div class="t" style="left:6px;top:9.4px;font-size:14.2px;color:#1a1d22;-webkit-text-stroke:0.1px #1a1d22">15</div></div>
<div class="a" style="left:1675px;top:1135px;width:152px;height:32px;background:#bdfcbd;border-left:3px solid #a8aaad;border-radius:3px;overflow:hidden"><div class="t" style="left:6px;top:9.4px;font-size:14.2px;color:#1a1d22;-webkit-text-stroke:0.1px #1a1d22">12</div></div>
<div class="a" style="left:535px;top:1185px;width:1292px;height:31px;background:#c3976b;border-left:3px solid #f21c1c;border-radius:3px;overflow:hidden"><div class="t" style="left:6px;top:8.9px;font-size:14.1px;color:#fff;font-weight:bold;-webkit-text-stroke:0.1px #fff">20 | Southearth Jazz Festival</div></div>
<div class="a" style="left:1421px;top:1218px;width:406px;height:31px;background:#c1c1c1;border-left:4px solid #1fcf1f;border-radius:3px;overflow:hidden"><div class="t" style="left:4.5px;top:8.6px;font-size:14.8px;color:#2b2f36;-webkit-text-stroke:0.1px #2b2f36">1 | DJ kit + PA Dryhire project</div></div>
<div class="a" style="left:1421px;top:1251px;width:406px;height:30px;background:#c1c1c1;border-left:4px solid #1fcf1f;border-radius:3px;overflow:hidden"><div class="t" style="left:4.5px;top:8.1px;font-size:14.8px;color:#2b2f36;-webkit-text-stroke:0.1px #2b2f36">1 | DJ kit + PA Dryhire project</div></div>
<div class="a" style="left:1421px;top:1283px;width:188px;height:31px;background:#c1c1c1;border-left:4px solid #1fcf1f;border-radius:3px;overflow:hidden"><div class="t" style="left:4.5px;top:8.6px;font-size:14.8px;color:#2b2f36;-webkit-text-stroke:0.1px #2b2f36">15 | DJ kit + PA Dryhire project</div></div>
<div class="a" style="left:1674px;top:1283px;width:218px;height:31px;background:#c1c1c1;border-left:4px solid #1fcf1f;border-radius:3px;overflow:hidden"><div class="t" style="left:4.5px;top:8.6px;font-size:14.8px;color:#2b2f36;-webkit-text-stroke:0.1px #2b2f36">3 | Live performance band Soul</div></div>
<div class="a" style="left:0;top:0;width:76px;height:1326px;background:#3a3a47;box-shadow:2px 0 6px rgba(0,0,0,.18),1px 0 0 #d9dce1"></div>
<div class="a" style="left:0;top:0;width:76px;height:91px;background:#2b2c37"></div>
<svg class="a" style="left:20px;top:100.5px" width="32" height="32" viewBox="0 0 24 24"><path fill="#a5a5ad" d="M3 13h8V3H3v10zm0 8h8v-6H3v6zm10 0h8V11h-8v10zm0-18v6h8V3h-8z"/></svg>
<svg class="a" style="left:20px;top:155.0px" width="32" height="32" viewBox="0 0 24 24"><path fill="#a5a5ad" d="M17 12h-5v5h5v-5zM16 1v2H8V1H6v2H5c-1.11 0-1.99.9-1.99 2L3 19c0 1.1.89 2 2 2h14c1.1 0 2-.9 2-2V5c0-1.1-.9-2-2-2h-1V1h-2zm3 18H5V8h14v11z"/></svg>
<svg class="a" style="left:20px;top:209.0px" width="32" height="32" viewBox="0 0 24 24"><circle cx="12" cy="12" r="10" fill="#a5a5ad"/><circle cx="12" cy="8" r="1.7" fill="#3a3a47"/><circle cx="8.3" cy="14.2" r="1.7" fill="#3a3a47"/><circle cx="15.7" cy="14.2" r="1.7" fill="#3a3a47"/></svg>
<svg class="a" style="left:20px;top:341.0px" width="32" height="32" viewBox="0 0 24 24"><circle cx="12" cy="12" r="10" fill="#a5a5ad"/><circle cx="12" cy="8.2" r="2.2" fill="#3a3a47"/><ellipse cx="12" cy="15.2" rx="5.2" ry="2.4" fill="#3a3a47"/></svg>
<svg class="a" style="left:20px;top:395.0px" width="32" height="32" viewBox="0 0 24 24"><circle cx="12" cy="12" r="10" fill="#a5a5ad"/><path d="M10.5 10.3h5" stroke="#3a3a47" stroke-width="1.4"/><path d="M17.8 10.3l-2.6-1.9v3.8z" fill="#3a3a47"/><path d="M13.5 13.9h-5" stroke="#3a3a47" stroke-width="1.4"/><path d="M6.2 13.9l2.6-1.9v3.8z" fill="#3a3a47"/></svg>
<svg class="a" style="left:20px;top:449.0px" width="32" height="32" viewBox="0 0 24 24"><circle cx="12" cy="12" r="10" fill="#a5a5ad"/><path d="M15 8.6c-.6-1-1.7-1.6-3-1.6-1.7 0-3 .9-3 2.3 0 3.2 6.1 1.8 6.1 5.1 0 1.5-1.4 2.6-3.1 2.6-1.4 0-2.6-.7-3.2-1.8M12 4.8v2.2M12 17v2.2" fill="none" stroke="#3a3a47" stroke-width="1.2"/></svg>
<svg class="a" style="left:20px;top:527.0px" width="32" height="32" viewBox="0 0 24 24"><path fill="#a5a5ad" d="M12 3l-4.5 7h9z"/><rect x="4" y="12.5" width="7.5" height="7.5" rx="1" fill="#a5a5ad"/><circle cx="16.5" cy="16.3" r="4" fill="#a5a5ad"/></svg>
<svg class="a" style="left:20px;top:581.0px" width="32" height="32" viewBox="0 0 24 24"><rect x="0.3" y="3.2" width="23.4" height="16.8" rx="1.6" fill="#a5a5ad"/><circle cx="8.3" cy="8.6" r="2.3" fill="#3a3a47"/><path fill="#3a3a47" d="M3.2 17c.6-2.4 2.6-3.6 5.1-3.6s4.5 1.2 5.1 3.6z"/><path fill="none" stroke="#3a3a47" stroke-width="1.4" d="M19.3 6.8c-1.8 1.8-1.8 7.8 0 9.6"/></svg>
<svg class="a" style="left:20px;top:635.0px" width="32" height="32" viewBox="0 0 24 24"><path fill="#a5a5ad" d="M16 11c1.66 0 2.99-1.34 2.99-3S17.66 5 16 5c-1.66 0-3 1.34-3 3s1.34 3 3 3zm-8 0c1.66 0 2.99-1.34 2.99-3S9.66 5 8 5C6.34 5 5 6.34 5 8s1.34 3 3 3zm0 2c-2.33 0-7 1.17-7 3.5V19h14v-2.5c0-2.33-4.67-3.5-7-3.5zm8 0c-.29 0-.62.02-.97.05 1.16.84 1.970 1.97 1.97 3.45V19h6v-2.5c0-2.33-4.67-3.5-7-3.5z"/></svg>
<svg class="a" style="left:20px;top:689.0px" width="32" height="32" viewBox="0 0 24 24"><path fill="#a5a5ad" d="M20 8h-3V4H3c-1.1 0-2 .9-2 2v11h2c0 1.66 1.34 3 3 3s3-1.34 3-3h6c0 1.66 1.34 3 3 3s3-1.34 3-3h2v-5l-3-4zM6 18.5c-.83 0-1.5-.67-1.5-1.5s.67-1.5 1.5-1.5 1.5.67 1.5 1.5-.67 1.5-1.5 1.5zm13.5-9l1.96 2.5H17V9.5h2.5zm-1.5 9c-.83 0-1.5-.67-1.5-1.5s.67-1.5 1.5-1.5 1.5.67 1.5 1.5-.67 1.5-1.5 1.5z"/></svg>
<svg class="a" style="left:20px;top:766.0px" width="32" height="32" viewBox="0 0 24 24"><path fill="#a5a5ad" d="M19 3h-4.18C14.4 1.84 13.3 1 12 1c-1.3 0-2.4.84-2.82 2H5c-1.1 0-2 .9-2 2v14c0 1.1.9 2 2 2h14c1.1 0 2-.9 2-2V5c0-1.1-.9-2-2-2zm-7 0c.55 0 1 .45 1 1s-.45 1-1 1-1-.45-1-1 .45-1 1-1zm-2 14l-4-4 1.41-1.41L10 14.17l6.59-6.59L18 9l-8 8z"/></svg>
<svg class="a" style="left:20px;top:822.0px" width="32" height="32" viewBox="0 0 24 24"><path fill="#a5a5ad" d="M12 2C6.5 2 2 6.5 2 12s4.5 10 10 10 10-4.5 10-10S17.5 2 12 2zm3.2 12.8L11.3 12.4V7h1.4v4.7l3.3 2z"/></svg>
<svg class="a" style="left:20px;top:875.0px" width="32" height="32" viewBox="0 0 24 24"><path fill="#a5a5ad" d="M22.7 19l-9.1-9.1c.9-2.3.4-5-1.5-6.9-2-2-5-2.4-7.4-1.3L9 6 6 9 1.6 4.7C.4 7.1.9 10.1 2.9 12.1c1.9 1.9 4.6 2.4 6.9 1.5l9.1 9.1c.4.4 1 .4 1.4 0l2.3-2.3c.5-.4.5-1.1.1-1.4z"/></svg>
<svg class="a" style="left:20px;top:930.0px" width="32" height="32" viewBox="0 0 24 24"><path fill="#a5a5ad" d="M19 3H5c-1.1 0-2 .9-2 2v14c0 1.1.9 2 2 2h14c1.1 0 2-.9 2-2V5c0-1.1-.9-2-2-2zM9 17H7.6v-5H9v5zm3.7 0h-1.4V9h1.4v8zm3.7 0H15v-3h1.4v3z"/></svg>
<svg class="a" style="left:20px;top:1008.0px" width="32" height="32" viewBox="0 0 24 24"><rect x="2" y="4" width="20" height="14" rx="1.2" fill="none" stroke="#a5a5ad" stroke-width="1.8"/><rect x="8" y="18.5" width="8" height="2" fill="#a5a5ad"/><rect x="5" y="7.5" width="14" height="1.6" fill="#a5a5ad"/><rect x="5" y="10.5" width="14" height="1.6" fill="#a5a5ad"/><rect x="5" y="13.5" width="14" height="1.6" fill="#a5a5ad"/></svg>
<svg class="a" style="left:20px;top:1085.0px" width="32" height="32" viewBox="0 0 24 24"><path fill="#a5a5ad" d="M19.14 12.94c.04-.3.06-.61.06-.94 0-.32-.02-.64-.07-.94l2.03-1.58c.18-.14.23-.41.12-.61l-1.92-3.32c-.12-.22-.37-.29-.59-.22l-2.39.96c-.5-.38-1.03-.7-1.620-.94l-.36-2.54c-.04-.24-.24-.41-.48-.41h-3.84c-.24 0-.43.17-.47.41l-.36 2.54c-.59.24-1.13.57-1.62.94l-2.39-.96c-.22-.08-.47 0-.59.22L2.74 8.87c-.12.21-.08.47.12.61l2.03 1.58c-.05.3-.09.63-.09.94s.02.64.07.94l-2.03 1.58c-.18.14-.23.41-.12.61l1.92 3.32c.12.22.37.29.59.22l2.39-.96c.5.38 1.03.7 1.62.94l.36 2.54c.05.24.24.41.48.41h3.84c.24 0 .44-.17.47-.41l.36-2.54c.59-.24 1.13-.56 1.62-.94l2.39.96c.22.08.47 0 .59-.22l1.92-3.32c.12-.22.07-.47-.12-.61l-2.01-1.58zM12 15.6c-1.98 0-3.6-1.62-3.6-3.6s1.62-3.6 3.6-3.6 3.6 1.62 3.6 3.6-1.62 3.6-3.6 3.6z"/></svg>
<div class="a" style="left:0;top:265px;width:76px;height:68px;background:#137ef9"></div>
<svg class="a" style="left:22px;top:283px" width="28" height="27" viewBox="0 0 28 27"><path d="M3.5 1.7h21a2.5 2.5 0 0 1 2.5 2.5v4.5H1V4.2a2.5 2.5 0 0 1 2.5-2.5z" fill="#fff"/><path d="M1 10.5h7.6V25H3.5A2.5 2.5 0 0 1 1 22.5z" fill="#fff"/><rect x="10.2" y="10.5" width="7.6" height="14.5" fill="#fff"/><path d="M19.4 10.5H27v12a2.5 2.5 0 0 1-2.5 2.5h-5.1z" fill="#fff"/></svg>
<svg class="a" style="left:23px;top:38px" width="27" height="20" viewBox="0 0 27 20"><rect x="0.5" y="0.6" width="26" height="3.6" rx="1.8" fill="#fff"/><rect x="0.5" y="7.6" width="26" height="3.6" rx="1.8" fill="#fff"/><rect x="0.5" y="14.6" width="26" height="3.6" rx="1.8" fill="#fff"/></svg>
<div class="a" style="left:0;top:507px;width:76px;height:1px;background:#50515d"></div>
<div class="a" style="left:0;top:747px;width:76px;height:1px;background:#50515d"></div>
<div class="a" style="left:0;top:988px;width:76px;height:1px;background:#50515d"></div>
<div class="a" style="left:0;top:1066px;width:76px;height:1px;background:#50515d"></div>
</div></div></body></html>
